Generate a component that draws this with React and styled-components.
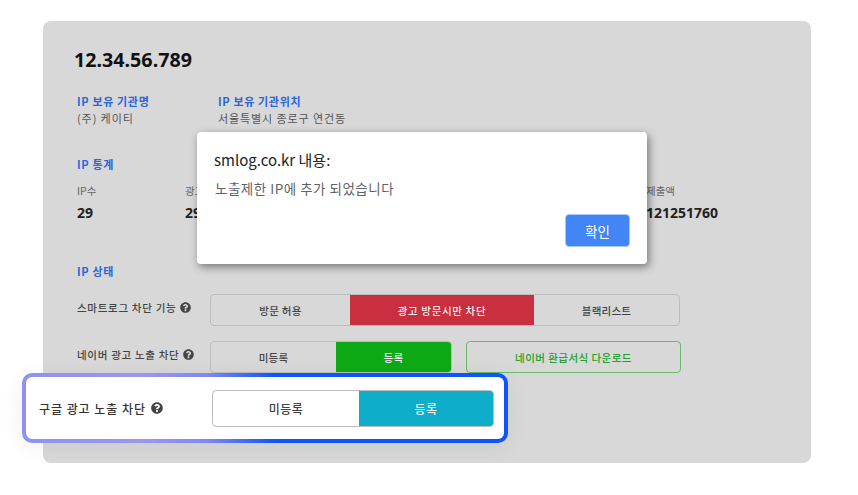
import styled, { createGlobalStyle } from 'styled-components'
import { FaQuestionCircle } from 'react-icons/fa'

const GlobalStyle = createGlobalStyle`
  html, body {
    margin: 0;
    padding: 0;
    background: #fff;
  }
  body {
    font-family: 'Noto Sans CJK KR', 'Noto Sans', sans-serif;
    overflow: hidden;
  }
`

const Page = styled.div`
  width: 858px;
  height: 495px;
  padding: 21px 0 0 43px;
  box-sizing: border-box;
`

const Card = styled.main`
  position: relative;
  width: 768px;
  height: 442px;
  box-sizing: border-box;
  padding: 25px 0 0 34px;
  background: #d8d8d8;
  border-radius: 8px;
`

const Title = styled.h1`
  margin: 0 0 0 -3px;
  font-family: 'Noto Sans', sans-serif;
  font-size: 19.7px;
  line-height: 28px;
  font-weight: 700;
  color: #111;
`

const InfoRow = styled.div`
  display: flex;
  margin-top: 19px;
`

const InfoBlock = styled.div`
  width: ${(props) => props.$width}px;
`

const SectionLabel = styled.h2`
  margin: ${(props) => props.$top || 0}px 0 0;
  font-size: 11px;
  line-height: 16px;
  font-weight: 700;
  letter-spacing: 0.65px;
  color: #2a66d8;
`

const InfoValue = styled.div`
  margin-top: 1px;
  font-size: 11px;
  line-height: 16px;
  letter-spacing: 0.9px;
  color: #555;
`

const StatGrid = styled.div`
  display: grid;
  grid-template-columns: repeat(6, 108px);
  margin-top: 11px;
`

const StatLabel = styled.div`
  font-size: 10.5px;
  line-height: 16px;
  color: #666;
  white-space: nowrap;
  text-align: ${(props) => (props.$last ? 'right' : 'left')};
  width: ${(props) => (props.$last ? '58px' : 'auto')};
`

const StatValue = styled.div`
  margin-top: 4px;
  font-family: 'Noto Sans', sans-serif;
  font-size: 14px;
  line-height: 20px;
  font-weight: 700;
  color: #222;
  text-align: ${(props) => (props.$last ? 'right' : 'left')};
  width: ${(props) => (props.$last ? '101px' : 'auto')};
`

const StatusRow = styled.div`
  display: flex;
  align-items: center;
  height: 32px;
  margin-top: ${(props) => props.$top}px;
`

const RowLabel = styled.div`
  display: flex;
  align-items: center;
  gap: 4px;
  width: 133px;
  margin-top: -5px;
  font-size: 10.5px;
  font-weight: 500;
  letter-spacing: 0.7px;
  color: #444;
  white-space: nowrap;

  svg {
    width: 11px;
    height: 11px;
    color: #444;
  }
`

const Segments = styled.div`
  display: flex;
  height: 100%;
  box-sizing: border-box;
  border: 1px solid #bdbdbd;
  border-radius: 4px;
  overflow: hidden;
  background: ${(props) => props.$background || 'transparent'};
`

const Segment = styled.div`
  display: flex;
  align-items: center;
  justify-content: center;
  width: ${(props) => props.$width}px;
  font-size: ${(props) => props.$size || 10.5}px;
  font-weight: 500;
  letter-spacing: ${(props) => props.$spacing || 0.25}px;
  color: ${(props) => (props.$fill ? '#f2f2f2' : '#444')};
  background: ${(props) => props.$fill || 'transparent'};
`

const OutlineButton = styled.div`
  display: flex;
  align-items: center;
  justify-content: center;
  width: 215px;
  height: 100%;
  margin-left: 14px;
  box-sizing: border-box;
  border: 1.5px solid #66bb6a;
  border-radius: 4px;
  font-size: 10.5px;
  font-weight: 500;
  letter-spacing: 0.45px;
  color: #23a127;
`

const Highlight = styled.div`
  position: absolute;
  left: -21px;
  top: 352px;
  display: flex;
  align-items: center;
  box-sizing: border-box;
  width: 486px;
  height: 70px;
  padding-left: 13px;
  border: 4px solid transparent;
  border-radius: 10px;
  background:
    linear-gradient(#fff, #fff) padding-box,
    linear-gradient(90deg, #8f92f0 0%, #9a97ee 25%, #7f88f4 38%, #0f55ff 52%, #0f55ff 100%) border-box;
  box-shadow: 0 4px 24px rgba(0, 0, 0, 0.06);
`

const HighlightLabel = styled(RowLabel)`
  gap: 5px;
  width: 173px;
  margin-top: 0;
  font-size: 12px;
  letter-spacing: 0.95px;
  color: #333;

  svg {
    width: 12px;
    height: 12px;
  }
`

const HighlightSegments = styled(Segments)`
  height: 37px;
`

const Dialog = styled.div`
  position: absolute;
  left: 154px;
  top: 111px;
  width: 450px;
  height: 132px;
  box-sizing: border-box;
  padding: 18px 17px 0;
  background: #fff;
  border-radius: 4px;
  box-shadow: 2px 3px 8px rgba(0, 0, 0, 0.45);
`

const DialogTitle = styled.div`
  font-size: 15px;
  line-height: 20px;
  color: #202124;
`

const DialogMessage = styled.div`
  margin-top: 8px;
  margin-left: 1px;
  font-size: 13.5px;
  line-height: 20px;
  letter-spacing: 0.5px;
  color: #5f6368;
`

const DialogFooter = styled.div`
  display: flex;
  justify-content: flex-end;
  margin-top: 16px;
`

const ConfirmButton = styled.button`
  width: 65px;
  height: 33px;
  padding: 0;
  border: 1px solid #a8c7fa;
  border-radius: 4px;
  background: #4285f4;
  color: #fff;
  font-family: inherit;
  font-size: 13.5px;
`

const stats = [
  { label: 'IP수', value: '29' },
  { label: '광고 방문수', value: '29' },
  { label: '', value: '' },
  { label: '', value: '' },
  { label: '', value: '' },
]

const HelpLabel = ({ as: Label = RowLabel, children }) => (
  <Label>
    {children}
    <FaQuestionCircle />
  </Label>
)

const App = () => (
  <Page>
    <GlobalStyle />
    <Card>
      <Title>12.34.56.789</Title>

      <InfoRow>
        <InfoBlock $width={141}>
          <SectionLabel>IP 보유 기관명</SectionLabel>
          <InfoValue>(주) 케이티</InfoValue>
        </InfoBlock>
        <InfoBlock $width={200}>
          <SectionLabel>IP 보유 기관위치</SectionLabel>
          <InfoValue>서울특별시 종로구 연건동</InfoValue>
        </InfoBlock>
      </InfoRow>

      <SectionLabel $top={30}>IP 통계</SectionLabel>
      <StatGrid>
        {stats.map((stat, i) => (
          <div key={i}>
            <StatLabel>{stat.label}</StatLabel>
            <StatValue>{stat.value}</StatValue>
          </div>
        ))}
        <div>
          <StatLabel $last>광고 제출액</StatLabel>
          <StatValue $last>1121251760</StatValue>
        </div>
      </StatGrid>

      <SectionLabel $top={40}>IP 상태</SectionLabel>
      <StatusRow $top={15}>
        <HelpLabel>스마트로그 차단 기능</HelpLabel>
        <Segments>
          <Segment $width={139}>방문 허용</Segment>
          <Segment $width={184} $spacing={0.65} $fill="#c8303f">광고 방문시만 차단</Segment>
          <Segment $width={145}>블랙리스트</Segment>
        </Segments>
      </StatusRow>
      <StatusRow $top={15}>
        <HelpLabel>네이버 광고 노출 차단</HelpLabel>
        <Segments>
          <Segment $width={125}>미등록</Segment>
          <Segment $width={115} $fill="#0eaa16">등록</Segment>
        </Segments>
        <OutlineButton>네이버 환급서식 다운로드</OutlineButton>
      </StatusRow>

      <Highlight>
        <HelpLabel as={HighlightLabel}>구글 광고 노출 차단</HelpLabel>
        <HighlightSegments $background="#fff">
          <Segment $width={146} $size={12} $spacing={0.4}>미등록</Segment>
          <Segment $width={134} $size={12} $spacing={0.4} $fill="#0eadc9">등록</Segment>
        </HighlightSegments>
      </Highlight>

      <Dialog>
        <DialogTitle>smlog.co.kr 내용:</DialogTitle>
        <DialogMessage>노출제한 IP에 추가 되었습니다</DialogMessage>
        <DialogFooter>
          <ConfirmButton>확인</ConfirmButton>
        </DialogFooter>
      </Dialog>
    </Card>
  </Page>
)

export default App
